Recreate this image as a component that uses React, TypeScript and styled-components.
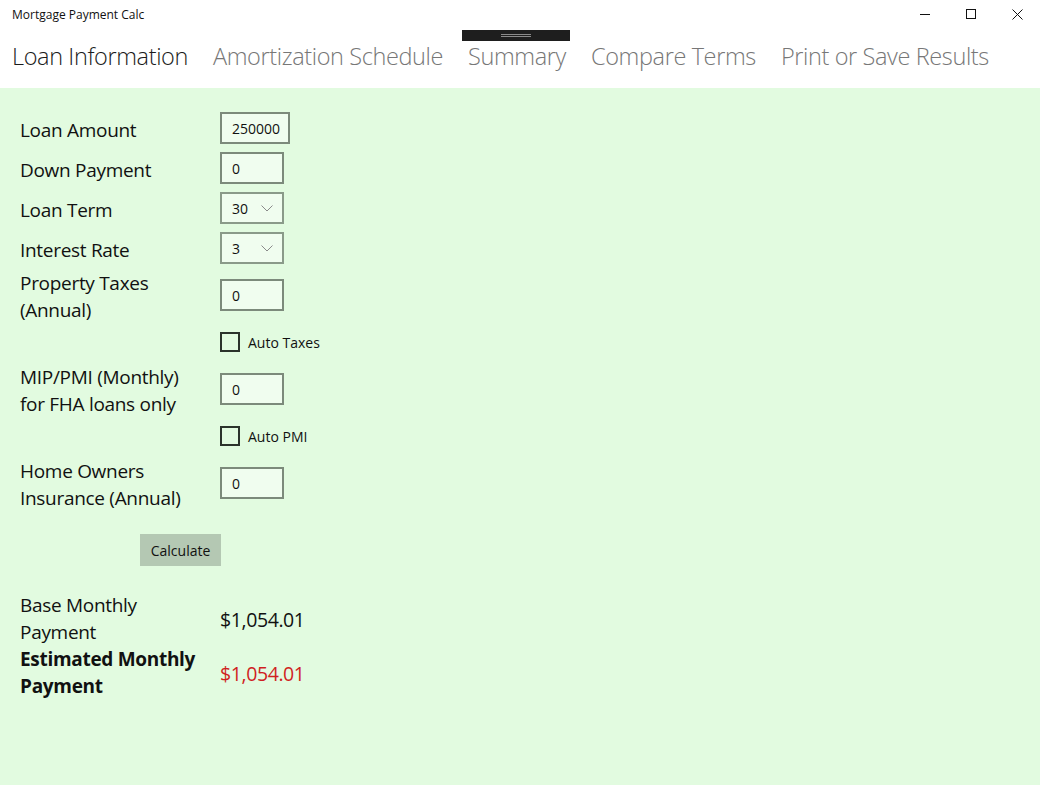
import React, { useState } from 'react';

import styled, { createGlobalStyle } from 'styled-components';

const GlobalStyle = createGlobalStyle`
  html,
  body {
    margin: 0;
    padding: 0;
    background: #ffffff;
  }

  body {
    font-family: 'Open Sans', 'Noto Sans', sans-serif;
    color: #1a1a1a;
  }
`;

const Window = styled.div`
  width: 1040px;
  height: 785px;
  display: flex;
  flex-direction: column;
  overflow: hidden;
`;

const TitleBar = styled.div`
  box-sizing: border-box;
  height: 30px;
  padding: 0 0 2px 12px;
  display: flex;
  align-items: center;
  justify-content: space-between;
`;

const TitleText = styled.span`
  font-size: 12px;
  color: #111;
`;

const WindowButtons = styled.div`
  display: flex;
  height: 100%;
`;

const WindowButton = styled.div`
  width: 46px;
  height: 100%;
  display: flex;
  align-items: center;
  justify-content: center;
  color: #111;
`;

const TabStrip = styled.nav`
  box-sizing: border-box;
  height: 58px;
  padding: 10px 0 0 12px;
  display: flex;
  align-items: flex-start;
  gap: 25px;
`;

const Tab = styled.div<{ $active?: boolean }>`
  position: relative;
  font-size: 23.5px;
  line-height: 32px;
  font-weight: 300;
  letter-spacing: -0.38px;
  color: ${(p) => (p.$active ? '#1b1b1b' : '#777777')};
  white-space: nowrap;
`;

const DragHandle = styled.div`
  position: absolute;
  top: -10px;
  left: -6px;
  right: -4px;
  height: 11px;
  background: #1e1e1e;
  display: flex;
  flex-direction: column;
  align-items: center;
  justify-content: center;
  gap: 1px;

  span {
    display: block;
    width: 30px;
    height: 1px;
    background: #8a8a8a;
  }
`;

const Content = styled.main`
  flex: 1;
  background: #e2fbe0;
  padding: 26px 20px 0;
`;

const Row = styled.div<{ $gap?: number }>`
  display: grid;
  grid-template-columns: 200px auto;
  align-items: center;
  margin-top: ${(p) => p.$gap ?? 0}px;
`;

const Label = styled.label<{ $bold?: boolean }>`
  font-size: 19px;
  line-height: 27px;
  font-weight: ${(p) => (p.$bold ? 700 : 400)};
  color: #111;
  letter-spacing: -0.3px;
`;

const Field = styled.input<{ $wide?: boolean }>`
  box-sizing: border-box;
  width: ${(p) => (p.$wide ? 70 : 64)}px;
  height: 32px;
  margin: -2px 0 2px;
  border: 2px solid #7c8a7b;
  background: #f0fdef;
  font: inherit;
  font-size: 14px;
  color: #111;
  padding: 0 0 0 10px;
  outline: none;
`;

const SelectBox = styled.div`
  box-sizing: border-box;
  width: 64px;
  height: 32px;
  margin: -2px 0 2px;
  border: 2px solid #8a9a89;
  background: #f0fdef;
  display: flex;
  align-items: center;
  justify-content: space-between;
  padding: 0 9px 0 10px;
  font-size: 14px;
  color: #111;
`;

const CheckRow = styled.label`
  display: flex;
  align-items: center;
  gap: 8px;
  font-size: 14px;
  color: #111;
`;

const CheckBox = styled.span<{ $checked?: boolean }>`
  box-sizing: border-box;
  width: 20px;
  height: 20px;
  border: 2px solid #2b332b;
  background: ${(p) => (p.$checked ? '#2b332b' : 'transparent')};
`;

const CalcButton = styled.button`
  margin: 22px 0 0 120px;
  width: 81px;
  height: 32px;
  border: none;
  background: #b4c8b3;
  font: inherit;
  font-size: 14px;
  color: #111;
  cursor: pointer;
`;

const Amount = styled.span<{ $highlight?: boolean }>`
  font-size: 19.5px;
  letter-spacing: -0.4px;
  color: ${(p) => (p.$highlight ? '#d01f1f' : '#111')};
`;

const Chevron = () => (
  <svg width='12' height='7' viewBox='0 0 12 7' fill='none'>
    <path d='M0.5 0.5 L6 6 L11.5 0.5' stroke='#8a8a8a' strokeWidth='1' />
  </svg>
);

const tabs = [
  'Loan Information',
  'Amortization Schedule',
  'Summary',
  'Compare Terms',
  'Print or Save Results',
];

const App = () => {
  const [autoTaxes, setAutoTaxes] = useState(false);
  const [autoPmi, setAutoPmi] = useState(false);

  return (
    <Window>
      <GlobalStyle />
      <TitleBar>
        <TitleText>Mortgage Payment Calc</TitleText>
        <WindowButtons>
          <WindowButton>
            <svg width='10' height='10' viewBox='0 0 10 10'>
              <path d='M0 5.5 H10' stroke='#111' strokeWidth='1' />
            </svg>
          </WindowButton>
          <WindowButton>
            <svg width='10' height='10' viewBox='0 0 10 10'>
              <rect x='0.5' y='0.5' width='9' height='9' fill='none' stroke='#111' strokeWidth='1' />
            </svg>
          </WindowButton>
          <WindowButton>
            <svg width='11' height='11' viewBox='0 0 11 11'>
              <path d='M0.5 0.5 L10.5 10.5 M10.5 0.5 L0.5 10.5' stroke='#111' strokeWidth='1' />
            </svg>
          </WindowButton>
        </WindowButtons>
      </TitleBar>

      <TabStrip>
        {tabs.map((tab, i) => (
          <Tab key={tab} $active={i === 0}>
            {tab}
            {tab === 'Summary' && (
              <DragHandle>
                <span />
                <span />
              </DragHandle>
            )}
          </Tab>
        ))}
      </TabStrip>

      <Content>
        <Row>
          <Label>Loan Amount</Label>
          <Field $wide defaultValue='250000' />
        </Row>
        <Row $gap={8}>
          <Label>Down Payment</Label>
          <Field defaultValue='0' />
        </Row>
        <Row $gap={8}>
          <Label>Loan Term</Label>
          <SelectBox>
            30
            <Chevron />
          </SelectBox>
        </Row>
        <Row $gap={8}>
          <Label>Interest Rate</Label>
          <SelectBox>
            3
            <Chevron />
          </SelectBox>
        </Row>
        <Row $gap={4}>
          <Label>
            Property Taxes
            <br />
            (Annual)
          </Label>
          <Field defaultValue='0' />
        </Row>
        <Row $gap={8}>
          <span />
          <CheckRow onClick={() => setAutoTaxes(!autoTaxes)}>
            <CheckBox $checked={autoTaxes} />
            Auto Taxes
          </CheckRow>
        </Row>
        <Row $gap={12}>
          <Label>
            MIP/PMI (Monthly)
            <br />
            for FHA loans only
          </Label>
          <Field defaultValue='0' />
        </Row>
        <Row $gap={8}>
          <span />
          <CheckRow onClick={() => setAutoPmi(!autoPmi)}>
            <CheckBox $checked={autoPmi} />
            Auto PMI
          </CheckRow>
        </Row>
        <Row $gap={12}>
          <Label>
            Home Owners
            <br />
            Insurance (Annual)
          </Label>
          <Field defaultValue='0' />
        </Row>

        <CalcButton type='button'>Calculate</CalcButton>

        <Row $gap={26}>
          <Label>
            Base Monthly
            <br />
            Payment
          </Label>
          <Amount>$1,054.01</Amount>
        </Row>
        <Row>
          <Label $bold>
            Estimated Monthly
            <br />
            Payment
          </Label>
          <Amount $highlight>$1,054.01</Amount>
        </Row>
      </Content>
    </Window>
  );
};

export default App;
